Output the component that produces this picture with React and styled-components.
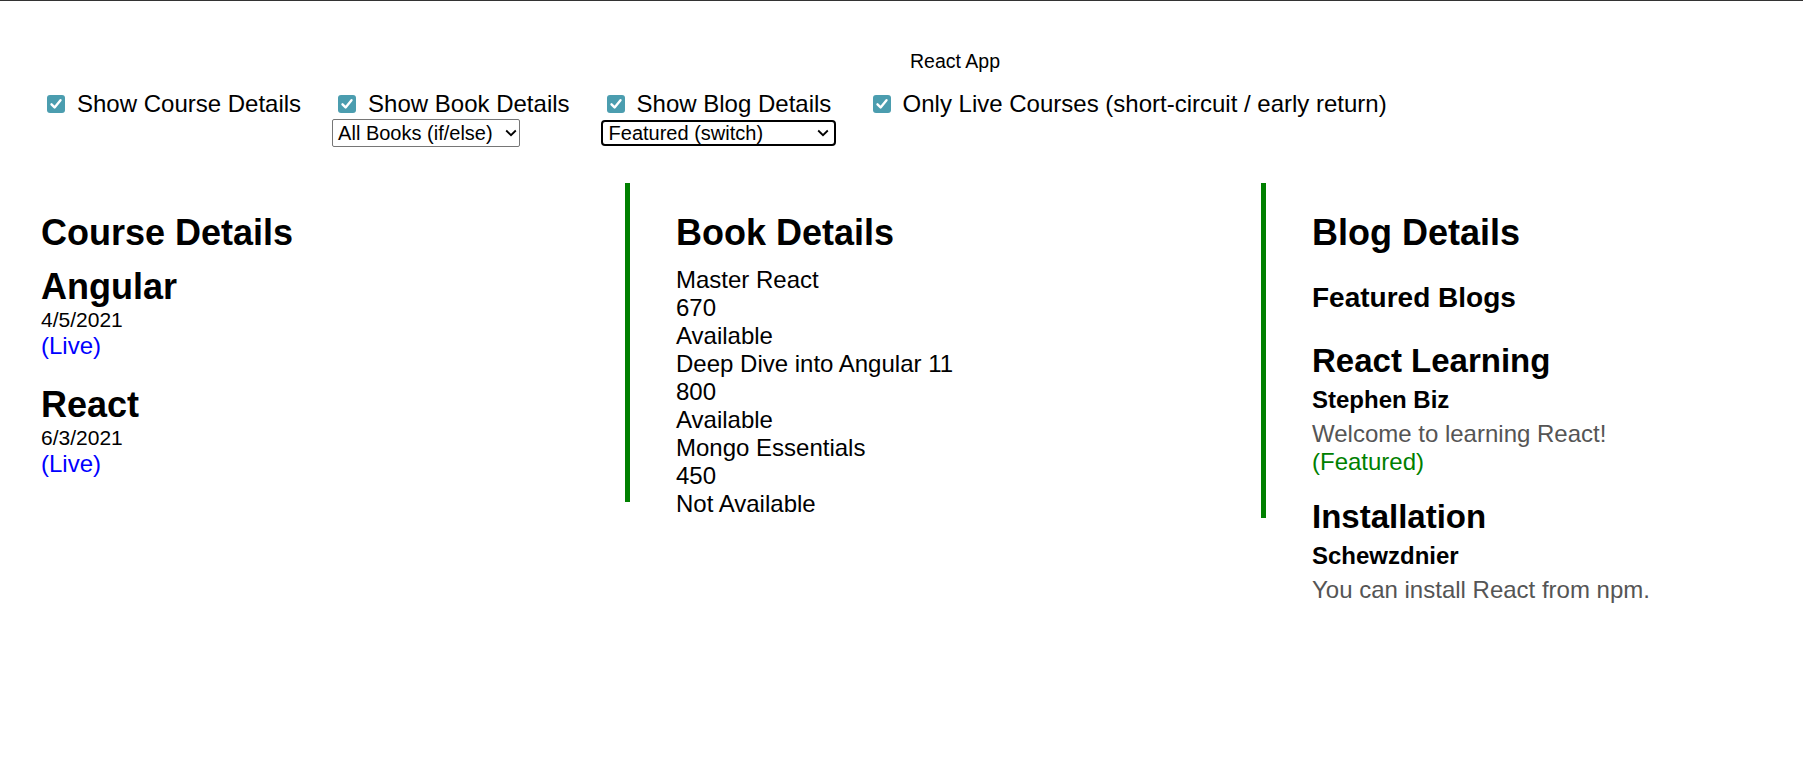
import styled, { createGlobalStyle } from "styled-components";

const GlobalStyle = createGlobalStyle`
  html, body {
    margin: 0;
    background: #fff;
  }
  body {
    border-top: 1px solid #333;
    font-family: "Liberation Sans", Arial, sans-serif;
    color: #000;
  }
`;

const Page = styled.div`
  padding: 0 41px;
`;

const AppTitle = styled.div`
  margin-top: 49px;
  padding-left: 107px;
  text-align: center;
  font-size: 19.5px;
  line-height: 23px;
`;

const Toolbar = styled.div`
  display: flex;
  align-items: flex-start;
  gap: 31px;
  margin-top: 17px;
`;

const Group = styled.div`
  display: flex;
  flex-direction: column;
  align-items: flex-start;
`;

const Toggle = styled.label`
  display: flex;
  align-items: center;
  font-size: 24px;
  line-height: 28px;
  cursor: pointer;
`;

const Box = styled.span`
  display: flex;
  align-items: center;
  justify-content: center;
  width: 18px;
  height: 18px;
  margin: 0 12px 0 6px;
  border-radius: 3px;
  background: #4b9daf;
`;

const Select = styled.div`
  display: flex;
  align-items: center;
  justify-content: space-between;
  box-sizing: border-box;
  width: ${p => p.$width}px;
  height: ${p => (p.$focused ? 26 : 28)}px;
  margin-top: ${p => (p.$focused ? 2 : 1)}px;
  padding: 0 ${p => (p.$focused ? 5 : 2)}px 0 ${p => (p.$focused ? 6 : 5)}px;
  border: ${p => (p.$focused ? "2px solid #000" : "1px solid #767676")};
  border-radius: ${p => (p.$focused ? 4 : 2)}px;
  font-size: 20px;
  line-height: 23px;
  background: #fff;
`;

const Columns = styled.div`
  display: grid;
  grid-template-columns: 589px 636px 1fr;
  align-items: start;
  margin-top: 36px;
`;

const Column = styled.section`
  padding-left: ${p => (p.$first ? 0 : 46)}px;
  border-right: ${p => (p.$divider ? "5px solid #008000" : "none")};
`;

const SectionTitle = styled.h2`
  margin: 28.5px 0 12.7px;
  font-size: 36px;
  line-height: 42px;
  font-weight: bold;
`;

const CourseItem = styled.div`
  margin-bottom: 24px;
`;

const CourseName = styled.h2`
  margin: 0;
  font-size: 36px;
  line-height: 42px;
`;

const CourseDate = styled.div`
  font-size: 21px;
  line-height: 24px;
`;

const Tag = styled.div`
  font-size: 24px;
  line-height: 28px;
  color: ${p => p.$color};
`;

const BookLine = styled.div`
  font-size: 24px;
  line-height: 28px;
`;

const FeaturedHeading = styled.h3`
  margin: 28px 0;
  font-size: 28px;
  line-height: 32px;
`;

const BlogItem = styled.article`
  margin-bottom: 22px;
`;

const BlogTitle = styled.h3`
  margin: 0 0 6px;
  font-size: 33px;
  line-height: 38px;
`;

const BlogAuthor = styled.h4`
  margin: 0 0 6px;
  font-size: 24px;
  line-height: 28px;
`;

const BlogText = styled.p`
  margin: 0;
  font-size: 24px;
  line-height: 28px;
  color: #555;
`;

const courses = [
  { name: "Angular", date: "4/5/2021", live: true },
  { name: "React", date: "6/3/2021", live: true },
];

const books = [
  { name: "Master React", price: 670, available: true },
  { name: "Deep Dive into Angular 11", price: 800, available: true },
  { name: "Mongo Essentials", price: 450, available: false },
];

const blogs = [
  { title: "React Learning", author: "Stephen Biz", text: "Welcome to learning React!", featured: true },
  { title: "Installation", author: "Schewzdnier", text: "You can install React from npm.", featured: false },
];

const Check = ({ label }) => (
  <Toggle>
    <Box>
      <svg width="14" height="14" viewBox="0 0 14 14">
        <path d="M2.5 7.3 L5.6 10.4 L11.5 3.2" fill="none" stroke="#fff" strokeWidth="2.4" strokeLinecap="round" strokeLinejoin="round" />
      </svg>
    </Box>
    {label}
  </Toggle>
);

const Chevron = () => (
  <svg width="12" height="8" viewBox="0 0 12 8">
    <path d="M1.2 1.5 L6 6.2 L10.8 1.5" fill="none" stroke="#000" strokeWidth="1.8" />
  </svg>
);

const App = () => {
  return (
    <>
      <GlobalStyle />
      <Page>
        <AppTitle>React App</AppTitle>
        <Toolbar>
          <Group>
            <Check label="Show Course Details" />
          </Group>
          <Group>
            <Check label="Show Book Details" />
            <Select $width={188}>
              All Books (if/else)
              <Chevron />
            </Select>
          </Group>
          <Group>
            <Check label="Show Blog Details" />
            <Select $width={235} $focused>
              Featured (switch)
              <Chevron />
            </Select>
          </Group>
          <Group>
            <Check label="Only Live Courses (short-circuit / early return)" />
          </Group>
        </Toolbar>

        <Columns>
          <Column $first $divider>
            <SectionTitle>Course Details</SectionTitle>
            {courses.map(c => (
              <CourseItem key={c.name}>
                <CourseName>{c.name}</CourseName>
                <CourseDate>{c.date}</CourseDate>
                {c.live && <Tag $color="#0000ff">(Live)</Tag>}
              </CourseItem>
            ))}
          </Column>

          <Column $divider>
            <SectionTitle>Book Details</SectionTitle>
            {books.map(b => (
              <div key={b.name}>
                <BookLine>{b.name}</BookLine>
                <BookLine>{b.price}</BookLine>
                <BookLine>{b.available ? "Available" : "Not Available"}</BookLine>
              </div>
            ))}
          </Column>

          <Column>
            <SectionTitle>Blog Details</SectionTitle>
            <FeaturedHeading>Featured Blogs</FeaturedHeading>
            {blogs.map(b => (
              <BlogItem key={b.title}>
                <BlogTitle>{b.title}</BlogTitle>
                <BlogAuthor>{b.author}</BlogAuthor>
                <BlogText>{b.text}</BlogText>
                {b.featured && <Tag $color="#008000">(Featured)</Tag>}
              </BlogItem>
            ))}
          </Column>
        </Columns>
      </Page>
    </>
  );
};

export default App;
